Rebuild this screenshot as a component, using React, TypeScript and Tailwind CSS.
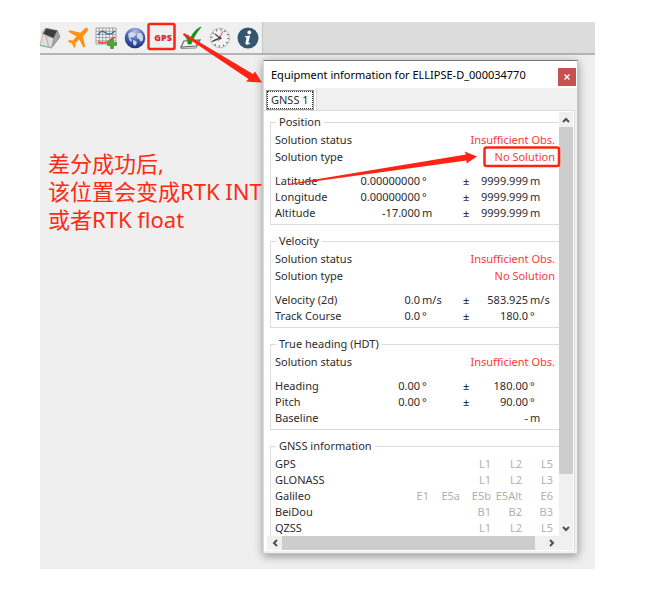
import type { ReactNode } from "react";

type Measure = { label: string; value?: string; unit?: string; error: string; errorUnit: string };

const position: Measure[] = [
  { label: "Latitude", value: "0.00000000", unit: "°", error: "9999.999", errorUnit: "m" },
  { label: "Longitude", value: "0.00000000", unit: "°", error: "9999.999", errorUnit: "m" },
  { label: "Altitude", value: "-17.000", unit: "m", error: "9999.999", errorUnit: "m" },
];

const velocity: Measure[] = [
  { label: "Velocity (2d)", value: "0.0", unit: "m/s", error: "583.925", errorUnit: "m/s" },
  { label: "Track Course", value: "0.0", unit: "°", error: "180.0", errorUnit: "°" },
];

const heading: Measure[] = [
  { label: "Heading", value: "0.00", unit: "°", error: "180.00", errorUnit: "°" },
  { label: "Pitch", value: "0.00", unit: "°", error: "90.00", errorUnit: "°" },
  { label: "Baseline", error: "-", errorUnit: "m" },
];

const signals: [string, string[]][] = [
  ["GPS", ["", "", "L1", "L2", "L5"]],
  ["GLONASS", ["", "", "L1", "L2", "L3"]],
  ["Galileo", ["E1", "E5a", "E5b", "E5Alt", "E6"]],
  ["BeiDou", ["", "", "B1", "B2", "B3"]],
  ["QZSS", ["", "", "L1", "L2", "L5"]],
];

function ToolButton({ label, children }: { label: string; children: ReactNode }) {
  return (
    <button type="button" aria-label={label} className="flex h-6 w-5 shrink-0 items-center justify-center">
      {children}
    </button>
  );
}

function CubeIcon() {
  return (
    <svg width="22" height="22" viewBox="0 0 22 22" className="shrink-0">
      <path d="M6 1 2 6 10 14 14 20.500 21 10.500 18.500 3.500Z" fill="#c9c9c9" />
      <path d="M7 1.200 18.500 3.600 14.500 11.500 4 7Z" fill="#3e3e3e" stroke="#8a8a8a" strokeWidth=".6" />
      <path d="M18.500 3.600 21 10 12.500 20.500 14.500 11.500Z" fill="#a3a3a3" stroke="#888" strokeWidth=".6" />
      <path d="M4 7 14.500 11.500 12.500 20.500 1 18Z" fill="#dedede" stroke="#999" strokeWidth=".6" />
      <path d="M1 18.500 12.500 21" stroke="#6fb56f" strokeWidth=".9" />
      <path d="M7 9 9.500 19" stroke="#d58a8a" strokeWidth=".8" />
    </svg>
  );
}

function PlaneIcon() {
  return (
    <svg width="22" height="22" viewBox="0 0 22 22" className="shrink-0">
      <path
        d="M20.600 1.200c-1-.7-2.400-.2-3.300.7L13.300 5.800 2.900 3.200 1.300 4.700 9.600 9.600 5.700 13.600 2.300 13.100.9 14.500 5 16.700 7.200 20.900 8.600 19.500 8.200 16.200 12.300 12.400 16.500 20.800 18.100 19.200 15.900 8.900 19.900 4.900c.9-.9 1.400-2.700.7-3.700Z"
        fill="#ff930f"
      />
    </svg>
  );
}

function ChartIcon() {
  return (
    <svg width="23" height="22" viewBox="0 0 23 22" className="shrink-0">
      <rect x="1" y="1" width="20" height="16" fill="#f8f8f8" />
      <path
        d="M1 1H21V17H1ZM4.300 1V17M7.700 1V17M11 1V17M14.300 1V17M17.700 1V17M1 4.200H21M1 7.400H21M1 10.600H21M1 13.800H21"
        fill="none"
        stroke="#8e8e8e"
        strokeWidth=".8"
      />
      <path d="M3 8C6 3 8 4 11 6S17 7 20 4" fill="none" stroke="#3d6fa5" strokeWidth="1.500" />
      <path d="M3 15C7 16 10 17 14 14S18 11 20 10" fill="none" stroke="#e24a32" strokeWidth="1.500" />
      <path d="M15.500 12.500h3v3h3v3h-3v3h-3v-3h-3v-3h3Z" fill="#45a736" stroke="#2c8423" strokeWidth=".6" />
    </svg>
  );
}

function GlobeIcon() {
  return (
    <svg width="22" height="22" viewBox="0 0 22 22" className="shrink-0">
      <defs>
        <radialGradient id="globe" cx=".5" cy=".2" r=".8">
          <stop offset="0" stopColor="#b4c4e6" />
          <stop offset=".5" stopColor="#4a69b0" />
          <stop offset="1" stopColor="#1b3280" />
        </radialGradient>
      </defs>
      <circle cx="11" cy="11" r="10.300" fill="url(#globe)" />
      <path
        d="M4 7 7 5 11 6 12 8 10 9 9 11 7 10 6 11 8 13 7 15 5 12Z M14 6 17 6 19 9 19 13 17 15 15 12 13 11 13 8Z M9 13 12 14 13 16 11 19 9 17Z"
        fill="#e2e9f4"
        opacity=".85"
      />
    </svg>
  );
}

function CheckIcon() {
  return (
    <svg width="22" height="24" viewBox="0 0 22 24" className="shrink-0">
      <path d="M4 15 20 14 16 20 1 21Z" fill="#f4f4f4" stroke="#666" strokeWidth="1.200" />
      <path d="M1 21v1.500L16 22 20 15" fill="none" stroke="#8a8a8a" />
      <path d="M5 10 8 9 10 13C13 7 16 3 21 1 17 6 13 12 11 18L8 18C8 15 7 12 5 10Z" fill="#149b14" stroke="#0a7410" strokeWidth=".6" />
    </svg>
  );
}

function ClockIcon() {
  return (
    <svg width="22" height="22" viewBox="0 0 22 22" className="shrink-0">
      <circle cx="11" cy="11" r="9.800" fill="#f3f3f3" stroke="#b5b5b5" strokeWidth=".8" />
      <circle cx="11" cy="11" r="8.300" fill="none" stroke="#666" strokeWidth="1.800" strokeDasharray="1.200 3.146" />
      <path d="M11 11 6 7M11 11 4 14" stroke="#4a4a4a" strokeWidth="1.400" />
      <path d="M9 14 14 4" stroke="#d86b74" strokeWidth="1.100" />
      <circle cx="11" cy="11" r="1.500" fill="#444" />
    </svg>
  );
}

function InfoIcon() {
  return (
    <svg width="22" height="22" viewBox="0 0 22 22" className="shrink-0">
      <circle cx="11" cy="11" r="10.500" fill="#34566f" />
      <circle cx="12.300" cy="5.400" r="1.900" fill="#fff" />
      <path d="M8 9.200 13.200 8.600 11.400 15.600C11.300 16.400 12 16.300 13.400 15.300L13.100 16.600C11.500 18 7.800 18.500 8.500 15.500L9.700 10.500 7.800 10.200Z" fill="#fff" />
    </svg>
  );
}

function Chevron({ d }: { d: string }) {
  return (
    <svg width="8" height="8" viewBox="0 0 8 8">
      <path d={d} fill="none" stroke="#505050" strokeWidth="2" />
    </svg>
  );
}

function Group({ title, children }: { title: string; children: ReactNode }) {
  return (
    <fieldset className="min-w-0 border border-r-0 border-[#dcdcdc] pr-1 pb-[3px] pl-1">
      <legend className="ml-[1px] h-4 px-[3px] leading-4">{title}</legend>
      {children}
    </fieldset>
  );
}

function Status({ rows }: { rows: [string, string][] }) {
  return (
    <table className="mt-px w-full">
      <tbody>
        {rows.map(([name, value]) => (
          <tr key={name} className="h-[17px]">
            <th scope="row" className="text-left font-normal">{name}</th>
            <td className="text-right text-[#fb3838]">{value}</td>
          </tr>
        ))}
      </tbody>
    </table>
  );
}

function Measures({ rows }: { rows: Measure[] }) {
  return (
    <table className="mt-2 w-full table-fixed whitespace-nowrap">
      <colgroup>
        <col />
        <col className="w-[70px]" />
        <col className="w-[43px]" />
        <col className="w-[14px]" />
        <col className="w-[51px]" />
        <col className="w-[27px]" />
      </colgroup>
      <tbody>
        {rows.map((row) => (
          <tr key={row.label} className="h-4">
            <th scope="row" className="text-left font-normal">{row.label}</th>
            <td className="text-right">{row.value}</td>
            <td className="pl-[2px]">{row.unit}</td>
            <td>{row.value ? "±" : ""}</td>
            <td className="text-right">{row.error}</td>
            <td className="pl-[2px]">{row.errorUnit}</td>
          </tr>
        ))}
      </tbody>
    </table>
  );
}

function EquipmentWindow() {
  return (
    <section className="border border-t-[#777] border-r-[#c4c4c4] border-b-[#c4c4c4] border-l-[#dadada] bg-[#f0f0f0] font-['Noto_Sans','Open_Sans',sans-serif] text-[11px] leading-4 text-[#2c2c2c] shadow-[0_2px_9px_rgba(0,0,0,0.4)]">
      <header className="flex h-[27px] items-center justify-between bg-white pr-px pl-[7px]">
        <h1 className="whitespace-nowrap text-black">Equipment information for ELLIPSE-D_000034770</h1>
        <button type="button" aria-label="Close" className="mt-1 flex h-[18px] w-[18px] items-center justify-center bg-[#c75050]">
          <svg width="6" height="6" viewBox="0 0 6 6">
            <path d="M.5.5 5.500 5.500M5.500.5.5 5.500" stroke="#fff" strokeWidth="1.400" />
          </svg>
        </button>
      </header>
      <div role="tablist" className="flex h-[22px]">
        <button type="button" role="tab" aria-selected="true" className="border-r border-[#dcdcdc] bg-white px-[3px] pt-[2px] pb-px">
          <span className="block h-[18px] border border-dotted border-[#333] px-[3px] outline outline-1 outline-[#999]">GNSS 1</span>
        </button>
      </div>
      <div className="mr-[2px] mb-[2px] border-t border-r border-[#dcdcdc] bg-white pt-px pr-px pb-px pl-[3px]">
        <div className="flex h-[424px]">
          <div className="flex min-w-0 flex-1 flex-col gap-2 overflow-hidden pt-[2px] pl-[3px]">
            <Group title="Position">
              <Status rows={[["Solution status", "Insufficient Obs."], ["Solution type", "No Solution"]]} />
              <Measures rows={position} />
            </Group>
            <Group title="Velocity">
              <Status rows={[["Solution status", "Insufficient Obs."], ["Solution type", "No Solution"]]} />
              <Measures rows={velocity} />
            </Group>
            <Group title="True heading (HDT)">
              <Status rows={[["Solution status", "Insufficient Obs."]]} />
              <Measures rows={heading} />
            </Group>
            <Group title="GNSS information">
              <table className="mt-[2px] w-full table-fixed whitespace-nowrap">
                <colgroup>
                  <col />
                  <col className="w-[31px]" />
                  <col className="w-[31px]" />
                  <col className="w-[31px]" />
                  <col className="w-[31px]" />
                  <col className="w-[31px]" />
                </colgroup>
                <tbody>
                  {signals.map(([system, bands]) => (
                    <tr key={system} className="h-4">
                      <th scope="row" className="text-left font-normal">{system}</th>
                      {bands.map((band, i) => (
                        <td key={i} className="pr-[2px] text-right text-[#b0b0b0]">{band}</td>
                      ))}
                    </tr>
                  ))}
                </tbody>
              </table>
            </Group>
          </div>
          <div className="flex w-[14px] flex-col bg-[#f0f0f0]">
            <button type="button" aria-label="Scroll up" className="flex h-[15px] items-center justify-center">
              <Chevron d="M1 6 4 3 7 6" />
            </button>
            <div className="h-[347px] bg-[#cdcdcd]" />
            <button type="button" aria-label="Scroll down" className="mt-auto flex h-[15px] items-center justify-center">
              <Chevron d="M1 2 4 5 7 2" />
            </button>
          </div>
        </div>
        <div className="flex h-[14px] bg-[#f0f0f0]">
          <button type="button" aria-label="Scroll left" className="flex w-[15px] items-center justify-center">
            <Chevron d="M6 1 3 4 6 7" />
          </button>
          <div className="mr-[9px] flex-1 bg-[#cdcdcd]" />
          <button type="button" aria-label="Scroll right" className="mr-[14px] flex w-[15px] items-center justify-center">
            <Chevron d="M2 1 5 4 2 7" />
          </button>
        </div>
      </div>
    </section>
  );
}

export default function App() {
  return (
    <main className="min-h-screen bg-white pt-[22px] pr-[59px] pb-[37px] pl-10">
      <div className="relative bg-[#efefef] pb-[15px]">
        <div className="flex h-[33px] border-b-2 border-[#b4b4b4] bg-[#dcdcdc]">
          <nav aria-label="Tools" className="flex w-[223px] items-center justify-between border-r border-[#c4c4c4] bg-[#f0f0f0] pr-1">
            <ToolButton label="3D view"><CubeIcon /></ToolButton>
            <ToolButton label="Flight"><PlaneIcon /></ToolButton>
            <ToolButton label="Add chart"><ChartIcon /></ToolButton>
            <ToolButton label="Map"><GlobeIcon /></ToolButton>
            <ToolButton label="GPS information">
              <span className="font-['Open_Sans',sans-serif] text-[9px] font-extrabold text-[#dc2430]">GPS</span>
            </ToolButton>
            <ToolButton label="Validate"><CheckIcon /></ToolButton>
            <ToolButton label="Clock"><ClockIcon /></ToolButton>
            <ToolButton label="About"><InfoIcon /></ToolButton>
          </nav>
        </div>
        <div className="flex items-start pt-[5px]">
          <p className="relative z-10 w-[223px] shrink-0 pt-[89px] pl-2 font-['Noto_Sans','Noto_Sans_CJK_SC',sans-serif] text-[22px] leading-7 whitespace-nowrap text-[#ff2a14]">
            差分成功后,
            <br />
            该位置会变成RTK INT
            <br />
            或者RTK float
          </p>
          <div className="mr-[17px] min-w-0 flex-1">
            <EquipmentWindow />
          </div>
        </div>
        <svg aria-hidden="true" className="pointer-events-none absolute top-0 left-0 z-20" width="555" height="547" viewBox="40 22 555 547">
          <rect x="148.500" y="24" width="26" height="25" rx="1.500" fill="none" stroke="#ff2314" strokeWidth="2.500" />
          <rect x="484.500" y="147.500" width="74.500" height="18.500" rx="2" fill="none" stroke="#ff2314" strokeWidth="2.500" />
          <path d="M184 33 253 74 255 71.500 262 82.500 246 81.500 248.500 79 183 35Z" fill="#ff2314" />
          <path d="M288 184 466 154.500 464.500 151.500 477 156.500 466.500 163.500 466.500 160.500 288 185Z" fill="#ff2314" />
        </svg>
      </div>
    </main>
  );
}
